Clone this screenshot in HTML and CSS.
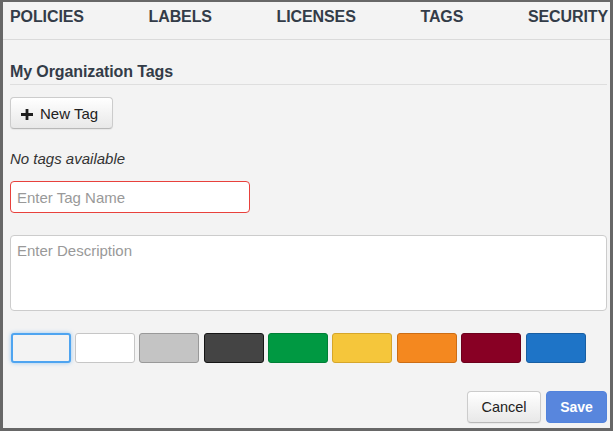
FILE: index.html
```html
<!DOCTYPE html>
<html lang="en">
<head>
<meta charset="utf-8">
<title>Tags</title>
<link rel="stylesheet" href="styles.css">
</head>
<body>
<div class="frame">
  <nav class="tabs">
    <span class="tab">POLICIES</span>
    <span class="tab">LABELS</span>
    <span class="tab">LICENSES</span>
    <span class="tab">TAGS</span>
    <span class="tab">SECURITY</span>
  </nav>
  <section class="content">
    <h2 class="section-title">My Organization Tags</h2>
    <button class="btn btn-new" type="button">
      <svg class="plus" width="12" height="11" viewBox="0 0 12 11" aria-hidden="true"><path d="M4.6 0h2.8v4.1H12v2.8H7.4V11H4.6V6.9H0V4.1h4.6z" fill="#1f1f1f"/></svg>
      <span>New Tag</span>
    </button>
    <p class="empty">No tags available</p>
    <input class="tag-name" type="text" placeholder="Enter Tag Name">
    <textarea class="tag-desc" placeholder="Enter Description"></textarea>
    <div class="swatches">
      <span class="swatch sw-none selected"></span>
      <span class="swatch sw-white"></span>
      <span class="swatch sw-silver"></span>
      <span class="swatch sw-dark"></span>
      <span class="swatch sw-green"></span>
      <span class="swatch sw-yellow"></span>
      <span class="swatch sw-orange"></span>
      <span class="swatch sw-maroon"></span>
      <span class="swatch sw-blue"></span>
    </div>
    <div class="actions">
      <button class="btn btn-cancel" type="button">Cancel</button>
      <button class="btn btn-save" type="button">Save</button>
    </div>
  </section>
</div>
</body>
</html>
```
FILE: styles.css
```css
* { box-sizing: border-box; }
html, body { margin: 0; padding: 0; }
body {
  font-family: "Liberation Sans", Arial, sans-serif;
  color: #333c48;
  background: #666;
}
.frame {
  width: 613px;
  height: 431px;
  border-style: solid;
  border-color: #676767;
  border-width: 2px 3px 3px 3px;
  background: #f3f3f3;
  overflow: hidden;
}
.tabs {
  display: flex;
  justify-content: space-between;
  padding: 6px 2px 13px 7px;
  border-bottom: 1px solid #dadada;
}
.tab {
  font-size: 16px;
  line-height: 18px;
  font-weight: bold;
  color: #333c48;
  letter-spacing: -0.1px;
}
.content {
  padding: 0 3px 0 7px;
}
.section-title {
  margin: 23px 0 0;
  font-size: 16px;
  line-height: 18px;
  font-weight: bold;
  padding-bottom: 3px;
  border-bottom: 1px solid #dedede;
  color: #333c48;
  letter-spacing: -0.1px;
}
.btn {
  font-family: "Liberation Sans", Arial, sans-serif;
  height: 32px;
  border-radius: 4px;
  cursor: pointer;
}
.btn-new, .btn-cancel {
  background: linear-gradient(#ffffff, #e8e8e8);
  border: 1px solid #cccccc;
  border-bottom-color: #b8b8b8;
  box-shadow: 0 1px 1px rgba(0,0,0,0.05);
  color: #222;
}
.btn-new {
  display: flex;
  align-items: center;
  margin-top: 12px;
  width: 103px;
  padding: 0 0 0 10px;
  font-size: 15px;
}
.plus { margin-right: 7px; margin-top: 2px; }
.empty {
  margin: 21px 0 0;
  font-size: 15px;
  line-height: 17px;
  font-style: italic;
  color: #333;
}
.tag-name {
  display: block;
  margin-top: 14px;
  width: 240px;
  height: 32px;
  border: 1px solid #e8413c;
  border-radius: 4px;
  background: #fff;
  padding: 0 6px;
  font-family: "Liberation Sans", Arial, sans-serif;
  font-size: 15px;
  color: #333;
  outline: none;
}
.tag-desc {
  display: block;
  margin-top: 22px;
  width: 597px;
  height: 76px;
  border: 1px solid #cccccc;
  border-radius: 4px;
  background: #fff;
  padding: 6px 6px;
  font-family: "Liberation Sans", Arial, sans-serif;
  font-size: 15px;
  line-height: 17px;
  resize: none;
  outline: none;
}
::placeholder { color: #999; opacity: 1; }
.swatches {
  display: flex;
  gap: 4.4px;
  margin-top: 22px;
  padding-left: 0.5px;
}
.swatch {
  display: block;
  width: 60px;
  height: 30px;
  border-radius: 3px;
  border: 1px solid #ccc;
}
.sw-none { background: #f3f3f3; }
.selected {
  border: 2px solid #4ea4f0;
  box-shadow: 0 0 4px rgba(78,164,240,0.55);
}
.sw-white { background: #ffffff; border-color: #c6c6c6; }
.sw-silver { background: #c4c4c4; border-color: #999; }
.sw-dark { background: #444444; border-color: #151515; }
.sw-green { background: #009942; border-color: #007f36; }
.sw-yellow { background: #f5c63b; border-color: #d6a62a; }
.sw-orange { background: #f4881f; border-color: #cc6d14; }
.sw-maroon { background: #880024; border-color: #6c001c; }
.sw-blue { background: #1e74c7; border-color: #185ea2; }
.actions {
  display: flex;
  justify-content: flex-end;
  gap: 5px;
  margin-top: 28px;
}
.btn-cancel {
  width: 74px;
  padding: 0;
  font-size: 14.5px;
}
.btn-save {
  width: 61px;
  padding: 0;
  border: 1px solid #5283dc;
  background: #5886dd;
  color: #fff;
  font-weight: bold;
  font-size: 14px;
}
```
